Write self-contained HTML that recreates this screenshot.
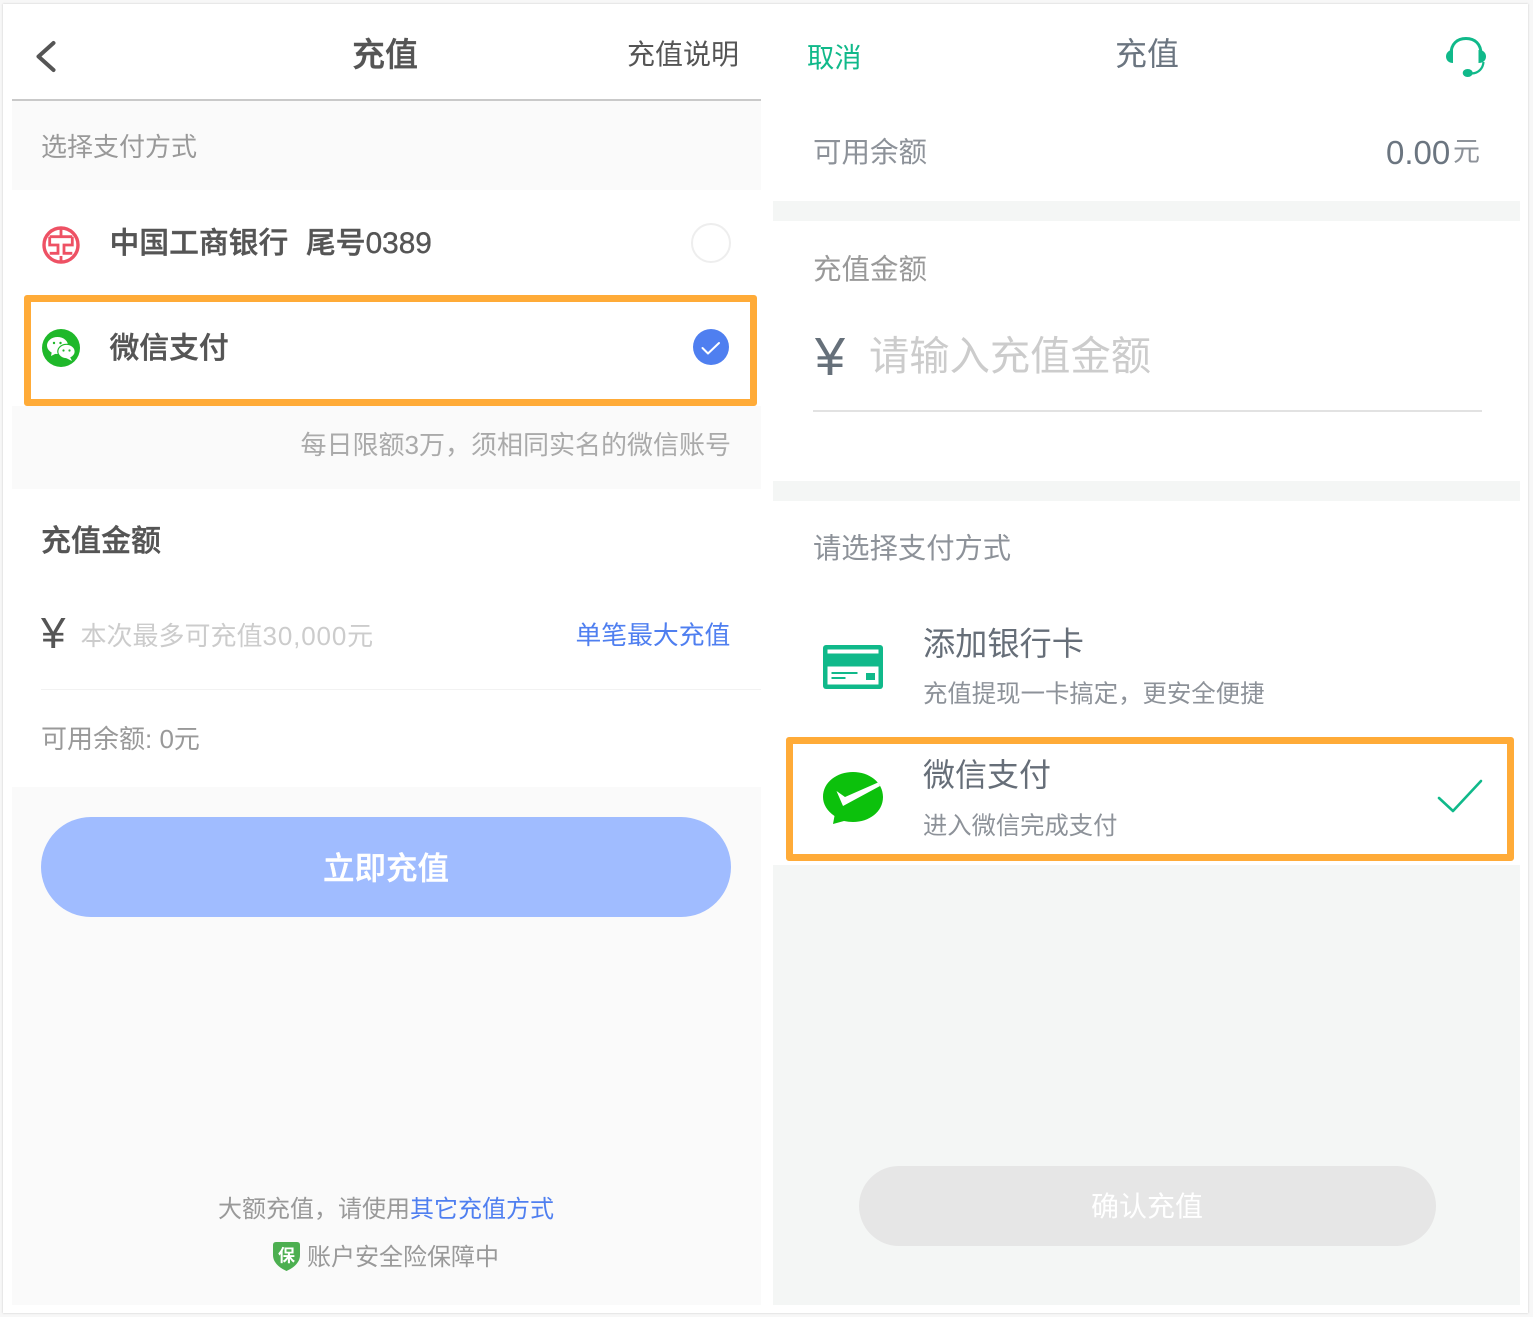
<!DOCTYPE html>
<html lang="zh-CN"><head><meta charset="utf-8"><title>充值</title>
<style>
html,body{margin:0;padding:0;background:#f7f7f7}
#p{position:relative;width:1533px;height:1317px;overflow:hidden;background:#f7f7f7;font-family:"Liberation Sans","Noto Sans CJK SC",sans-serif}
#f{position:absolute;left:3px;top:4px;width:1525px;height:1309px;background:#fff;box-shadow:0 0 2px #c8c8c8}
.t{position:absolute;white-space:nowrap;line-height:1}
.r{position:absolute}
.b{font-weight:500;-webkit-text-stroke:.4px currentColor}
svg{position:absolute;overflow:visible}
</style></head><body><div id="p"><div id="f"></div>
<div class="r" style="left:12px;top:99px;width:749px;height:1.5px;background:#c9c9c9"></div>
<div class="r" style="left:12px;top:101px;width:749px;height:89px;background:#fafafa"></div>
<div class="r" style="left:12px;top:406px;width:749px;height:83px;background:#fafafa"></div>
<div class="r" style="left:41px;top:689px;width:720px;height:1px;background:#f2f2f2"></div>
<div class="r" style="left:12px;top:787px;width:749px;height:518px;background:#fafafa"></div>
<svg style="left:0;top:0" width="80" height="90"><path d="M53.500 43 L38.500 56.500 L53.500 70" fill="none" stroke="#555" stroke-width="4" stroke-linecap="round" stroke-linejoin="round"/></svg>
<div class="t b" style="left:352px;top:38px;font-size:33px;color:#555">充值</div>
<div class="t" style="left:627px;top:41px;font-size:28px;color:#555">充值说明</div>
<div class="t" style="left:41px;top:134px;font-size:26px;color:#999">选择支付方式</div>
<svg style="left:42px;top:225.500px" width="38" height="38" viewBox="0 0 38 38"><circle cx="19" cy="19" r="17" fill="#fff" stroke="#ee5164" stroke-width="3.400"/><path d="M19 3V10.700M7.700 10.700H30.300M7.700 10.700V19H16V27.300H7.700M30.300 10.700V19H22V27.300H30.300M19 30V35" fill="none" stroke="#ee5164" stroke-width="2.800"/></svg>
<div class="t b" style="left:109.500px;top:229px;font-size:29.800px;color:#555">中国工商银行</div>
<div class="t b" style="left:306px;top:229px;font-size:29.800px;color:#555">尾号0389</div>
<div class="r" style="left:691px;top:223px;width:36px;height:36px;border:2px solid #eee;border-radius:50%"></div>
<div class="r" style="left:24px;top:295px;width:719px;height:97px;border:7px solid #ffab38;border-radius:3px"></div>
<svg style="left:42px;top:329px" width="38" height="38" viewBox="0 0 38 38"><circle cx="19" cy="19" r="19" fill="#1fb82a"/><ellipse cx="15.500" cy="16.500" rx="10.500" ry="8.500" fill="#fff"/><path d="M10 22L9 27L15 24Z" fill="#fff"/><ellipse cx="24.500" cy="22.500" rx="8.700" ry="7.200" fill="#fff" stroke="#1fb82a" stroke-width="1.200"/><path d="M28 28L30 32L24 29Z" fill="#fff"/><circle cx="12" cy="14" r="1.200" fill="#1fb82a"/><circle cx="18.500" cy="14" r="1.200" fill="#1fb82a"/><circle cx="21.500" cy="21.500" r="1.100" fill="#1fb82a"/><circle cx="27.500" cy="21.500" r="1.100" fill="#1fb82a"/></svg>
<div class="t b" style="left:109.500px;top:333.500px;font-size:29.800px;color:#555">微信支付</div>
<div class="r" style="left:693px;top:329px;width:36px;height:36px;background:#4f7ff0;border-radius:50%"></div>
<svg style="left:693px;top:329px" width="36" height="36"><path d="M9.500 19L15 24.500L26 14" fill="none" stroke="#fff" stroke-width="2" stroke-linecap="round" stroke-linejoin="round"/></svg>
<div class="t" style="right:802px;top:431.500px;font-size:26px;color:#aaa">每日限额3万，须相同实名的微信账号</div>
<div class="t b" style="left:41px;top:527px;font-size:30px;color:#555">充值金额</div>
<div class="t" style="left:41px;top:612px;font-size:44px;color:#555">¥</div>
<div class="t" style="left:80.500px;top:623px;font-size:26px;color:#ccc">本次最多可充值<span style="letter-spacing:.85px">30,000</span>元</div>
<div class="t" style="left:575.500px;top:624px;font-size:25.800px;color:#4f7ff0">单笔最大充值</div>
<div class="t" style="left:41px;top:725.500px;font-size:26px;color:#999">可用余额: 0元</div>
<div class="r" style="left:41px;top:817px;width:690px;height:100px;background:#a0bcff;border-radius:50px"></div>
<div class="t b" style="left:323px;top:853px;font-size:31.500px;color:#fff">立即充值</div>
<div class="t" style="left:218px;top:1198px;font-size:24px;color:#999">大额充值，请使用<span style="color:#4f7ff0">其它充值方式</span></div>
<svg style="left:273px;top:1241px" width="27" height="30" viewBox="0 0 27 30"><path d="M3 1H24Q27 1 27 4V14C27 22 20 27 13.500 30C7 27 0 22 0 14V4Q0 1 3 1Z" fill="#4caf50"/><text x="13.500" y="20.500" text-anchor="middle" font-size="17" font-weight="700" fill="#fff" font-family="'Noto Sans CJK SC',sans-serif">保</text></svg>
<div class="t" style="left:307px;top:1246px;font-size:24px;color:#999">账户安全险保障中</div>

<div class="t" style="left:807px;top:44px;font-size:27.300px;color:#10b98a">取消</div>
<div class="t" style="left:1115px;top:38px;font-size:32px;color:#6b7580">充值</div>
<svg style="left:1445px;top:36px" width="42" height="44" viewBox="0 0 42 44"><path d="M6 18C6 8 12 2.500 21 2.500S36 8 36 18" fill="none" stroke="#10b98a" stroke-width="3"/><path d="M8 14V27C3.500 27 1 24 1 20.500S3.500 14 8 14Z" fill="#10b98a"/><path d="M33.500 14V27C38.500 27 41 24 41 20.500S38.500 14 33.500 14Z" fill="#10b98a"/><path d="M38.500 26C38 32 34 37 27 37.500" fill="none" stroke="#10b98a" stroke-width="2.200"/><ellipse cx="22.700" cy="37" rx="5" ry="4" fill="#10b98a"/></svg>
<div class="t" style="left:813px;top:138.500px;font-size:28.500px;color:#8d9299">可用余额</div>
<div class="t" style="left:1386px;top:135.500px;font-size:33px;color:#6b7580">0.00</div>
<div class="t" style="left:1453px;top:138.500px;font-size:27px;color:#8d9299">元</div>
<div class="r" style="left:773px;top:201px;width:747px;height:20px;background:#f4f6f5"></div>
<div class="t" style="left:813px;top:255.500px;font-size:28.500px;color:#999">充值金额</div>
<div class="t" style="left:815px;top:330px;font-size:54px;color:#66707a">¥</div>
<div class="t" style="left:869px;top:337px;font-size:40.300px;color:#ccc">请输入充值金额</div>
<div class="r" style="left:813px;top:410px;width:669px;height:1.500px;background:#e2e2e2"></div>
<div class="r" style="left:773px;top:481px;width:747px;height:20px;background:#f4f6f5"></div>
<div class="t" style="left:813px;top:534px;font-size:28.300px;color:#8d9299">请选择支付方式</div>
<svg style="left:823px;top:644.500px" width="60" height="44" viewBox="0 0 60 44"><rect width="60" height="44" rx="3" fill="#10b98a"/><rect x="4.500" y="4.500" width="51" height="4" fill="#fff"/><rect x="4.500" y="21.500" width="51" height="18" fill="#fff"/><rect x="8.500" y="27" width="26" height="2" fill="#10b98a"/><rect x="8.500" y="32" width="14" height="2" fill="#10b98a"/><rect x="43" y="28" width="9" height="7" fill="#10b98a"/></svg>
<div class="t" style="left:923px;top:627.500px;font-size:32.200px;color:#666e78">添加银行卡</div>
<div class="t" style="left:923px;top:683px;font-size:24.400px;color:#8d9299">充值提现一卡搞定，更安全便捷</div>
<div class="r" style="left:773px;top:865px;width:747px;height:440px;background:#f4f6f5"></div>
<div class="r" style="left:786px;top:737px;width:714px;height:110px;border:7px solid #ffab38;border-radius:3px"></div>
<svg style="left:823px;top:771px" width="60" height="54" viewBox="0 0 60 54"><path d="M30 1C46 1 60 11 60 26C60 41 46 51 30 51C27 51 24 50.500 21 50L10 53L11.500 45C4 40 0 33 0 26C0 11 14 1 30 1Z" fill="#0cc10c"/><path d="M13.500 20L22 26L55 11.500L57 15L20 35Z" fill="#fff"/></svg>
<div class="t" style="left:923px;top:759px;font-size:32px;color:#666e78">微信支付</div>
<div class="t" style="left:923px;top:815px;font-size:24.300px;color:#8d9299">进入微信完成支付</div>
<svg style="left:1436px;top:778px" width="48" height="38"><path d="M3 20L17 33L45 3" fill="none" stroke="#10b98a" stroke-width="2.600" stroke-linecap="round" stroke-linejoin="round"/></svg>
<div class="r" style="left:859px;top:1166px;width:577px;height:80px;background:#e6e6e6;border-radius:40px"></div>
<div class="t" style="left:1091px;top:1193px;font-size:28px;color:#fff">确认充值</div>
</div></body></html>
